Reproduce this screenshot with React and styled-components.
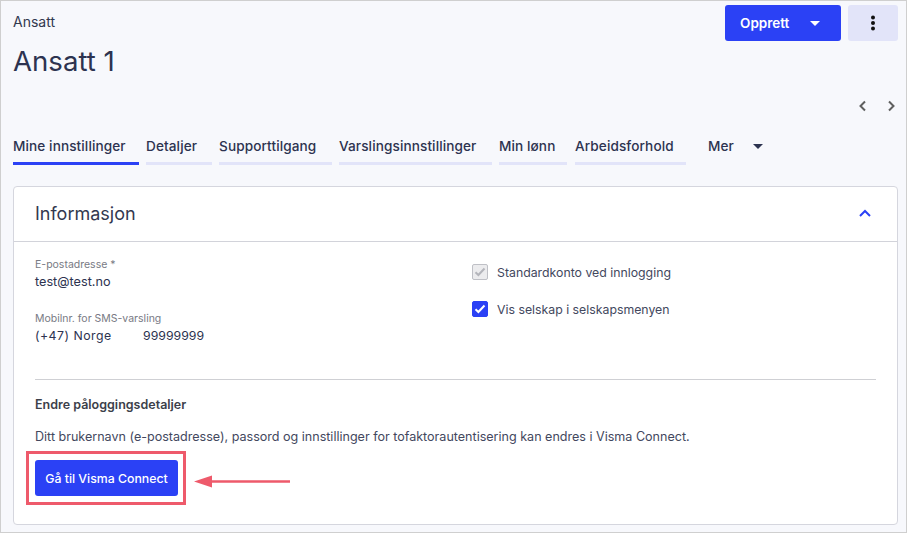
import styled, { createGlobalStyle } from 'styled-components'

const GlobalStyle = createGlobalStyle`
    html, body {
        margin: 0;
        padding: 0;
    }
    body {
        font-family: "Inter", "Open Sans", sans-serif;
        color: #2d3350;
    }
`

const Page = styled.div`
    position: relative;
    box-sizing: border-box;
    width: 907px;
    height: 533px;
    padding: 4px 8px 7px 12px;
    background: #f7f8fc;
    border: 1px solid #cfcfcf;
    overflow: hidden;
`

const TopBar = styled.div`
    display: flex;
    justify-content: space-between;
    align-items: flex-start;
    height: 83px;
`

const Crumb = styled.div`
    font-size: 14px;
    line-height: 16px;
    margin-top: 9px;
    color: #33384f;
`

const Title = styled.h1`
    margin: 15px 0 0;
    font-size: 27.6px;
    line-height: 32px;
    font-weight: 400;
    color: #2d3350;
`

const Actions = styled.div`
    display: flex;
    gap: 7px;
`

const PrimaryButton = styled.button`
    display: flex;
    align-items: center;
    justify-content: ${p => (p.$center ? 'center' : 'flex-start')};
    box-sizing: border-box;
    width: ${p => p.$width}px;
    height: 36px;
    padding: ${p => (p.$center ? '0' : '0 0 0 15px')};
    border: 0;
    border-radius: 3px;
    background: #2b41f5;
    color: #fff;
    font-family: inherit;
    font-size: ${p => p.$size || 13.5}px;
    font-weight: ${p => p.$weight || 500};
`

const MoreButton = styled.button`
    display: flex;
    align-items: center;
    justify-content: center;
    width: 50px;
    height: 36px;
    padding: 0;
    border: 0;
    border-radius: 3px;
    background: #e2e4f9;
`

const Caret = styled.span`
    display: block;
    width: 0;
    height: 0;
    margin-left: ${p => p.$gap}px;
    border-left: 5px solid transparent;
    border-right: 5px solid transparent;
    border-top: 5px solid ${p => p.$color};
`

const Pager = styled.div`
    display: flex;
    justify-content: flex-end;
    gap: 16px;
    height: 16px;
    padding-right: 1px;
    margin-top: 12px;
`

const Tabs = styled.div`
    display: flex;
    gap: 7px;
    margin-top: 22px;
    height: 28px;
`

const Tab = styled.div`
    box-sizing: border-box;
    width: ${p => p.$width}px;
    height: 27px;
    margin-right: ${p => p.$after || 0}px;
    font-size: 13.6px;
    font-weight: 500;
    letter-spacing: 0.1px;
    line-height: 17px;
    white-space: nowrap;
    color: #2d3350;
    border-bottom: 3px solid ${p => (p.$active ? '#2b41f5' : '#e2e4f9')};
`

const MoreTab = styled.div`
    display: flex;
    align-items: center;
    margin-left: 15px;
    height: 16px;
    font-size: 13.6px;
    font-weight: 500;
    color: #2d3350;
`

const Card = styled.section`
    margin-top: 20px;
    height: 339px;
    box-sizing: border-box;
    background: #fff;
    border: 1px solid #d5d6de;
    border-radius: 4px;
`

const CardHeader = styled.div`
    display: flex;
    align-items: center;
    justify-content: space-between;
    box-sizing: border-box;
    height: 55px;
    padding: 0 26px 2px 21px;
    border-bottom: 1px solid #d2d3da;
`

const CardTitle = styled.h2`
    margin: 0;
    font-size: 18px;
    font-weight: 400;
    color: #33384f;
`

const CardBody = styled.div`
    padding: 16px 21px 0;
`

const Columns = styled.div`
    display: grid;
    grid-template-columns: 437px 1fr;
    height: 121px;
`

const Field = styled.div`
    margin-bottom: 20px;
`

const Label = styled.div`
    font-size: 10.5px;
    line-height: 14px;
    color: #787a84;
`

const Value = styled.div`
    display: flex;
    font-size: ${p => (p.$first ? 12.3 : 12.7)}px;
    line-height: 20px;
    color: #2d3350;
    span {
        width: ${p => p.$first || 0}px;
        letter-spacing: ${p => (p.$first ? '0.5px' : '0')};
    }
`

const CheckRow = styled.label`
    display: flex;
    align-items: center;
    gap: 9px;
    height: 16px;
    margin: 0 0 21px;
    font-size: 12.3px;
    color: #43485e;
`

const CheckList = styled.div`
    padding-top: 6px;
`

const Box = styled.span`
    display: flex;
    align-items: center;
    justify-content: center;
    box-sizing: border-box;
    width: 16px;
    height: 16px;
    border-radius: 2px;
    border: 1px solid ${p => (p.$disabled ? '#bfc0c6' : '#2b41f5')};
    background: ${p => (p.$disabled ? '#ececee' : '#2b41f5')};
`

const Divider = styled.hr`
    margin: 0;
    border: 0;
    border-top: 1px solid #cfd0d4;
`

const SubHeading = styled.div`
    margin-top: 17px;
    font-size: 12.5px;
    line-height: 16px;
    font-weight: 600;
    color: #3c3f4a;
`

const Help = styled.p`
    margin: 16px 0 15px;
    font-size: 12.55px;
    line-height: 16px;
    color: #43485e;
    white-space: nowrap;
`

const Highlight = styled.div`
    position: absolute;
    left: 25px;
    top: 450px;
    box-sizing: border-box;
    width: 160px;
    height: 54px;
    border: 3px solid #ee5a6b;
`

const Arrow = styled.svg`
    position: absolute;
    left: 193px;
    top: 473px;
`

function Chevron({ points, color = '#5f5f5f', width = 2 }) {
    return (
        <svg width="12" height="12" viewBox="0 0 12 12" fill="none">
            <polyline points={points} stroke={color} strokeWidth={width} />
        </svg>
    )
}

function Tick({ color }) {
    return (
        <svg width="12" height="10" viewBox="0 0 12 10" fill="none">
            <polyline points="1.5,5.2 4.4,8 10.5,1.5" stroke={color} strokeWidth="2" />
        </svg>
    )
}

const tabs = [
    { label: 'Mine innstillinger', width: 126, active: true },
    { label: 'Detaljer', width: 66 },
    { label: 'Supporttilgang', width: 113 },
    { label: 'Varslingsinnstillinger', width: 153 },
    { label: 'Min lønn', width: 68, after: 1 },
    { label: 'Arbeidsforhold', width: 111 },
]

export default function App() {
    return (
        <>
            <GlobalStyle />
            <Page>
                <TopBar>
                    <div>
                        <Crumb>Ansatt</Crumb>
                        <Title>Ansatt 1</Title>
                    </div>
                    <Actions>
                        <PrimaryButton $width={116} $weight={600}>
                            Opprett
                            <Caret $color="#fff" $gap={21} />
                        </PrimaryButton>
                        <MoreButton aria-label="Flere valg">
                            <svg width="4" height="16" viewBox="0 0 4 16">
                                <circle cx="2" cy="2.5" r="2" fill="#111" />
                                <circle cx="2" cy="8" r="2" fill="#111" />
                                <circle cx="2" cy="13.5" r="2" fill="#111" />
                            </svg>
                        </MoreButton>
                    </Actions>
                </TopBar>

                <Pager>
                    <Chevron points="8,1.5 3.5,6 8,10.5" />
                    <Chevron points="4,1.5 8.5,6 4,10.5" />
                </Pager>

                <Tabs>
                    {tabs.map(t => (
                        <Tab key={t.label} $width={t.width} $active={t.active} $after={t.after}>
                            {t.label}
                        </Tab>
                    ))}
                    <MoreTab>
                        Mer
                        <Caret $color="#2d3350" $gap={19} />
                    </MoreTab>
                </Tabs>

                <Card>
                    <CardHeader>
                        <CardTitle>Informasjon</CardTitle>
                        <Chevron points="1,9 6,4 11,9" color="#2b41f5" />
                    </CardHeader>
                    <CardBody>
                        <Columns>
                            <div>
                                <Field>
                                    <Label>E-postadresse *</Label>
                                    <Value>test@test.no</Value>
                                </Field>
                                <Field>
                                    <Label>Mobilnr. for SMS-varsling</Label>
                                    <Value $first={108}>
                                        <span>(+47) Norge</span>
                                        99999999
                                    </Value>
                                </Field>
                            </div>
                            <CheckList>
                                <CheckRow>
                                    <Box $disabled>
                                        <Tick color="#b4b5bb" />
                                    </Box>
                                    Standardkonto ved innlogging
                                </CheckRow>
                                <CheckRow>
                                    <Box>
                                        <Tick color="#fff" />
                                    </Box>
                                    Vis selskap i selskapsmenyen
                                </CheckRow>
                            </CheckList>
                        </Columns>
                        <Divider />
                        <SubHeading>Endre påloggingsdetaljer</SubHeading>
                        <Help>
                            Ditt brukernavn (e-postadresse), passord og innstillinger for tofaktorautentisering kan endres i Visma Connect.
                        </Help>
                        <PrimaryButton $width={143} $center $size={12.3}>
                            Gå til Visma Connect
                        </PrimaryButton>
                    </CardBody>
                </Card>

                <Highlight />
                <Arrow width="98" height="16" viewBox="0 0 98 16">
                    <line x1="16" y1="7.5" x2="96" y2="7.5" stroke="#ee5a6b" strokeWidth="2.4" />
                    <polygon points="0,7.5 18,1.5 18,13.5" fill="#ee5a6b" />
                </Arrow>
            </Page>
        </>
    )
}
